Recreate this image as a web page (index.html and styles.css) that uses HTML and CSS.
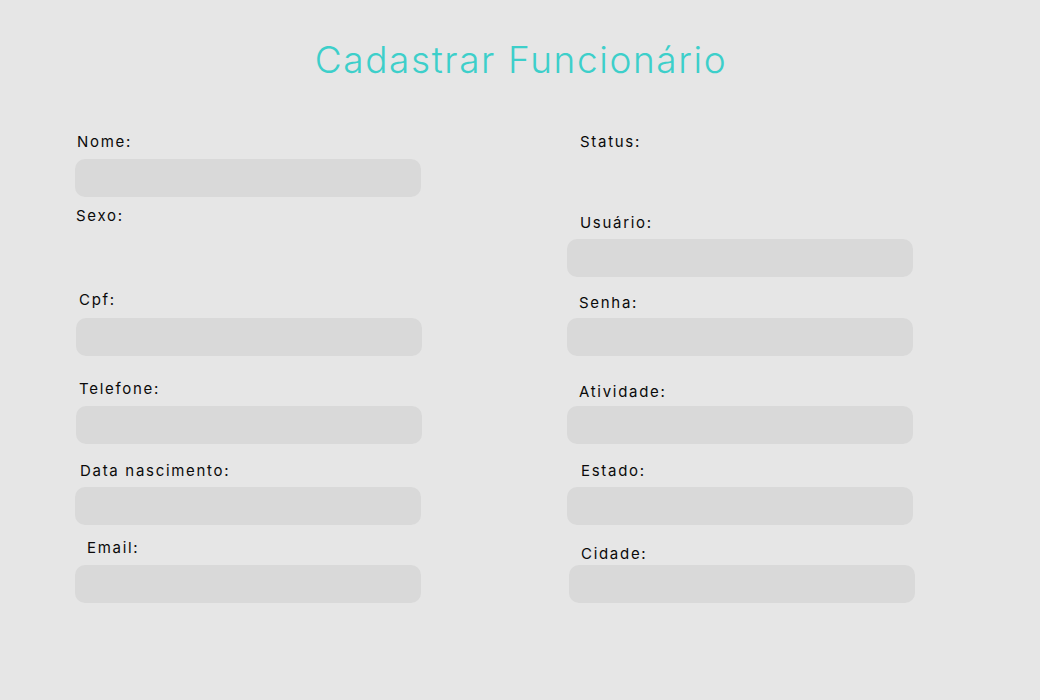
FILE: index.html
```html
<!DOCTYPE html>
<html lang="pt-BR">
<head>
<meta charset="utf-8">
<title>Cadastrar Funcionário</title>
<link rel="stylesheet" href="styles.css">
</head>
<body>
<main class="page">
  <h1 class="title">Cadastrar Funcionário</h1>
  <form class="form">
    <div class="col col-left">
      <div class="field f-nome">
        <label class="label">Nome:</label>
        <input class="input" type="text">
      </div>
      <div class="field f-sexo">
        <label class="label">Sexo:</label>
      </div>
      <div class="field f-cpf">
        <label class="label">Cpf:</label>
        <input class="input" type="text">
      </div>
      <div class="field f-tel">
        <label class="label">Telefone:</label>
        <input class="input" type="text">
      </div>
      <div class="field f-data">
        <label class="label">Data nascimento:</label>
        <input class="input" type="text">
      </div>
      <div class="field f-email">
        <label class="label">Email:</label>
        <input class="input" type="text">
      </div>
    </div>
    <div class="col col-right">
      <div class="field f-status">
        <label class="label">Status:</label>
      </div>
      <div class="field f-usuario">
        <label class="label">Usuário:</label>
        <input class="input" type="text">
      </div>
      <div class="field f-senha">
        <label class="label">Senha:</label>
        <input class="input" type="password">
      </div>
      <div class="field f-ativ">
        <label class="label">Atividade:</label>
        <input class="input" type="text">
      </div>
      <div class="field f-estado">
        <label class="label">Estado:</label>
        <input class="input" type="text">
      </div>
      <div class="field f-cidade">
        <label class="label">Cidade:</label>
        <input class="input" type="text">
      </div>
    </div>
  </form>
</main>
</body>
</html>
```

FILE: styles.css
```css
html, body {
  margin: 0;
  padding: 0;
  background: #e6e6e6;
  width: 1040px;
  height: 700px;
  overflow: hidden;
  font-family: Inter, "Noto Sans", sans-serif;
}

.page {
  padding-top: 36px;
}

.title {
  margin: 0;
  text-align: center;
  font-size: 37px;
  line-height: 48px;
  font-weight: 300;
  letter-spacing: 1.6px;
  color: #3dcfca;
  padding-left: 2px;
}

.form {
  display: flex;
  gap: 146px;
  padding-left: 75px;
  margin-top: 48px;
}

.col {
  width: 346px;
  display: flex;
  flex-direction: column;
}

.field {
  display: flex;
  flex-direction: column;
}

.label {
  display: block;
  font-size: 15px;
  line-height: 20px;
  font-weight: 400;
  color: #0a0a0a;
  letter-spacing: 1.7px;
}

.input {
  box-sizing: border-box;
  width: 346px;
  height: 38px;
  border: none;
  border-radius: 10px;
  background: #d9d9d9;
  padding: 0 12px;
  font: inherit;
  outline: none;
}

/* left column */
.f-nome .label { padding-left: 2px; }
.f-nome .input { margin-top: 7px; }
.f-sexo { margin-top: 9px; }
.f-sexo .label { padding-left: 1px; }
.f-cpf { margin-top: 64px; }
.f-cpf .label { padding-left: 4px; }
.f-cpf .input { margin-top: 8px; margin-left: 1px; }
.f-tel { margin-top: 23px; }
.f-tel .label { padding-left: 4px; }
.f-tel .input { margin-top: 7px; margin-left: 1px; }
.f-data { margin-top: 17px; }
.f-data .label { padding-left: 5px; }
.f-data .input { margin-top: 6px; }
.f-email { margin-top: 13px; }
.f-email .label { padding-left: 12px; }
.f-email .input { margin-top: 7px; }

/* right column */
.f-status .label { padding-left: 5px; margin-left: 0; }
.col-right .label { margin-left: 8px; }
.col-right .f-status .label { margin-left: 8px; }
.f-usuario { margin-top: 61px; }
.f-usuario .label { padding-left: 5px; }
.f-usuario .input { margin-top: 6px; }
.f-senha { margin-top: 16px; }
.f-senha .label { padding-left: 4px; }
.f-senha .input { margin-top: 5px; }
.f-ativ { margin-top: 26px; }
.f-ativ .label { padding-left: 4px; }
.f-ativ .input { margin-top: 4px; }
.f-estado { margin-top: 17px; }
.f-estado .label { padding-left: 6px; }
.f-estado .input { margin-top: 6px; }
.f-cidade { margin-top: 19px; }
.f-cidade .label { padding-left: 6px; }
.f-cidade .input { margin-top: 1px; margin-left: 2px; }
```
